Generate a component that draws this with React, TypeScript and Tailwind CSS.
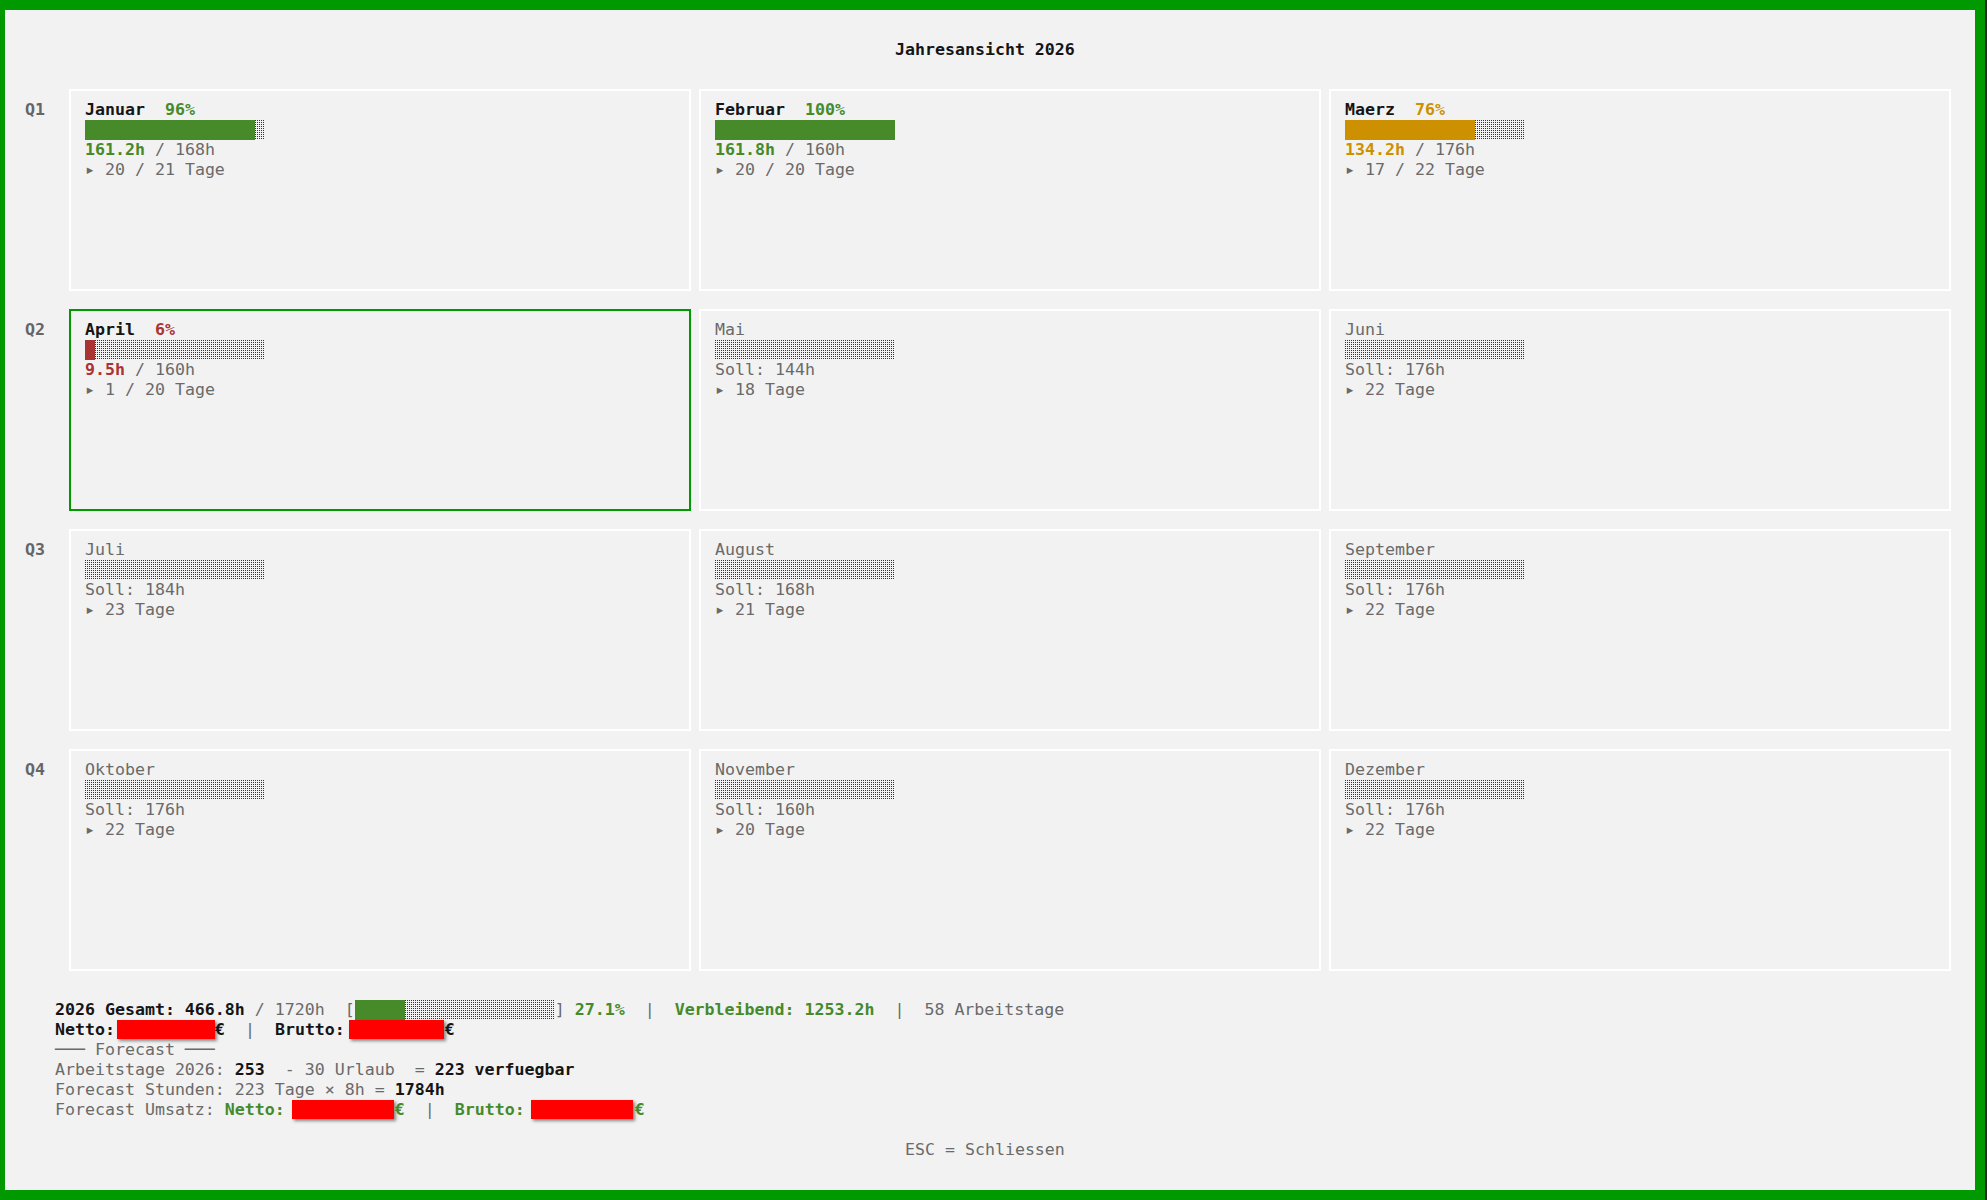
import React from "react";

type Tone = "green" | "orange" | "red";

const tone: Record<Tone, { text: string; bg: string }> = {
  green: { text: "text-[#468a2a]", bg: "bg-[#468a2a]" },
  orange: { text: "text-[#cc9000]", bg: "bg-[#cc9000]" },
  red: { text: "text-[#aa3333]", bg: "bg-[#aa3333]" },
};

type Month = {
  name: string;
  soll: string;
  days: string;
  done?: { pct: number; ist: string; fill: number; tone: Tone };
  active?: boolean;
};

const quarters: { q: string; tall?: boolean; months: Month[] }[] = [
  {
    q: "Q1",
    months: [
      { name: "Januar", soll: "168h", days: "20 / 21", done: { pct: 96, ist: "161.2h", fill: 17, tone: "green" } },
      { name: "Februar", soll: "160h", days: "20 / 20", done: { pct: 100, ist: "161.8h", fill: 18, tone: "green" } },
      { name: "Maerz", soll: "176h", days: "17 / 22", done: { pct: 76, ist: "134.2h", fill: 13, tone: "orange" } },
    ],
  },
  {
    q: "Q2",
    months: [
      { name: "April", soll: "160h", days: "1 / 20", active: true, done: { pct: 6, ist: "9.5h", fill: 1, tone: "red" } },
      { name: "Mai", soll: "144h", days: "18" },
      { name: "Juni", soll: "176h", days: "22" },
    ],
  },
  {
    q: "Q3",
    months: [
      { name: "Juli", soll: "184h", days: "23" },
      { name: "August", soll: "168h", days: "21" },
      { name: "September", soll: "176h", days: "22" },
    ],
  },
  {
    q: "Q4",
    tall: true,
    months: [
      { name: "Oktober", soll: "176h", days: "22" },
      { name: "November", soll: "160h", days: "20" },
      { name: "Dezember", soll: "176h", days: "22" },
    ],
  },
];

function Bar({ fill, cells, bg }: { fill: number; cells: number; bg: string }) {
  return (
    <div className="flex h-[20px]" style={{ width: cells * 10 }}>
      {fill > 0 && <div className={`h-[20px] ${bg}`} style={{ width: fill * 10 }} />}
      <div className="h-[20px] flex-1 bg-[image:conic-gradient(at_1px_1px,transparent_75%,#333333_0)] bg-[length:2px_2px]" />
    </div>
  );
}

function Card({ m, tall }: { m: Month; tall?: boolean }) {
  const border = m.active ? "border-[#009900]" : "border-white";
  const h = tall ? "h-[222px]" : "h-[202px]";
  return (
    <div className={`w-[622px] ${h} border-2 ${border} pl-[14px] pt-[9px]`}>
      {m.done ? (
        <>
          <div className="h-[20px] whitespace-pre">
            <span className="font-bold text-[#151515]">{m.name}</span>
            <span className={`font-bold ${tone[m.done.tone].text}`}>{"  " + m.done.pct + "%"}</span>
          </div>
          <Bar fill={m.done.fill} cells={18} bg={tone[m.done.tone].bg} />
          <div className="h-[20px] whitespace-pre">
            <span className={`font-bold ${tone[m.done.tone].text}`}>{m.done.ist}</span>
            <span className="text-[#6a6a6a]">{" / " + m.soll}</span>
          </div>
          <div className="h-[20px] whitespace-pre text-[#6a6a6a]">{"▸ " + m.days + " Tage"}</div>
        </>
      ) : (
        <>
          <div className="h-[20px] whitespace-pre text-[#6a6a6a]">{m.name}</div>
          <Bar fill={0} cells={18} bg="" />
          <div className="h-[20px] whitespace-pre text-[#6a6a6a]">{"Soll: " + m.soll}</div>
          <div className="h-[20px] whitespace-pre text-[#6a6a6a]">{"▸ " + m.days + " Tage"}</div>
        </>
      )}
    </div>
  );
}

function Redact({ w, pl, box }: { w: string; pl: string; box: string }) {
  return (
    <span className={`inline-block ${w} ${pl} h-[20px] align-top`}>
      <span className={`block ${box} h-[19px] bg-[#ff0000] shadow-[2px_2px_3px_rgba(0,0,0,0.45)]`} />
    </span>
  );
}

export default function App() {
  const gray = "text-[#6a6a6a]";
  const blk = "font-bold text-[#151515]";
  const grn = "font-bold text-[#468a2a]";
  return (
    <div className="w-[1987px] h-[1200px] bg-[#262626] flex font-['DejaVu_Sans_Mono',monospace] text-[16.6px] leading-[20px]">
      <div className="box-border w-[1985px] h-[1200px] border-t-[10px] border-l-[5px] border-r-[10px] border-b-[10px] border-[#009900] bg-[#f2f2f2] overflow-hidden">
        <div className="pt-[30px]">
          <div className={`h-[20px] pl-[890px] whitespace-pre ${blk}`}>Jahresansicht 2026</div>
        </div>

        <div className="mt-[29px] flex flex-col gap-[18px]">
          {quarters.map((q) => (
            <div key={q.q} className="flex">
              <div className="w-[64px] pl-[20px] pt-[11px] font-bold text-[#666666]">{q.q}</div>
              <div className="flex gap-[8px]">
                {q.months.map((m) => (
                  <Card key={m.name} m={m} tall={q.tall} />
                ))}
              </div>
            </div>
          ))}
        </div>

        <div className="mt-[29px] pl-[50px] whitespace-pre">
          <div className="h-[20px] flex">
            <span className={blk}>2026 Gesamt: 466.8h</span>
            <span className={gray}>{" / 1720h  ["}</span>
            <Bar fill={5} cells={20} bg="bg-[#468a2a]" />
            <span className={gray}>]</span>
            <span className={grn}>{" 27.1%"}</span>
            <span className={gray}>{"  |  "}</span>
            <span className={grn}>Verbleibend: 1253.2h</span>
            <span className={gray}>{"  |  58 Arbeitstage"}</span>
          </div>
          <div className="h-[20px]">
            <span className={blk}>Netto:</span>
            <Redact w="w-[100px]" pl="pl-[2px]" box="w-[98px]" />
            <span className={blk}>€</span>
            <span className={gray}>{"  |  "}</span>
            <span className={blk}>Brutto:</span>
            <Redact w="w-[100px]" pl="pl-[4px]" box="w-[95px]" />
            <span className={blk}>€</span>
          </div>
          <div className={`h-[20px] ${gray}`}>{"─── Forecast ───"}</div>
          <div className="h-[20px]">
            <span className={gray}>{"Arbeitstage 2026: "}</span>
            <span className={blk}>253</span>
            <span className={gray}>{"  - 30 Urlaub  = "}</span>
            <span className={blk}>223 verfuegbar</span>
          </div>
          <div className="h-[20px]">
            <span className={gray}>{"Forecast Stunden: 223 Tage × 8h = "}</span>
            <span className={blk}>1784h</span>
          </div>
          <div className="h-[20px]">
            <span className={gray}>{"Forecast Umsatz: "}</span>
            <span className={grn}>Netto:</span>
            <Redact w="w-[110px]" pl="pl-[7px]" box="w-[102px]" />
            <span className={grn}>€</span>
            <span className={gray}>{"  |  "}</span>
            <span className={grn}>Brutto:</span>
            <Redact w="w-[110px]" pl="pl-[6px]" box="w-[102px]" />
            <span className={grn}>€</span>
          </div>
          <div className="h-[20px]" />
        </div>
        <div className={`h-[20px] pl-[900px] whitespace-pre ${gray}`}>ESC = Schliessen</div>
      </div>
    </div>
  );
}
